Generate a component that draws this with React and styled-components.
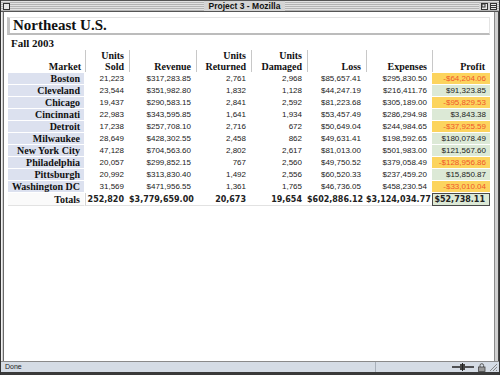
import React from 'react'
import styled, { createGlobalStyle } from 'styled-components'

const rows = [
  ['Boston', '21,223', '$317,283.85', '2,761', '2,968', '$85,657.41', '$295,830.50', '-$64,204.06'],
  ['Cleveland', '23,544', '$351,982.80', '1,832', '1,128', '$44,247.19', '$216,411.76', '$91,323.85'],
  ['Chicago', '19,437', '$290,583.15', '2,841', '2,592', '$81,223.68', '$305,189.00', '-$95,829.53'],
  ['Cincinnati', '22,983', '$343,595.85', '1,641', '1,934', '$53,457.49', '$286,294.98', '$3,843.38'],
  ['Detroit', '17,238', '$257,708.10', '2,716', '672', '$50,649.04', '$244,984.65', '-$37,925.59'],
  ['Milwaukee', '28,649', '$428,302.55', '2,458', '862', '$49,631.41', '$198,592.65', '$180,078.49'],
  ['New York City', '47,128', '$704,563.60', '2,802', '2,617', '$81,013.00', '$501,983.00', '$121,567.60'],
  ['Philadelphia', '20,057', '$299,852.15', '767', '2,560', '$49,750.52', '$379,058.49', '-$128,956.86'],
  ['Pittsburgh', '20,992', '$313,830.40', '1,492', '2,556', '$60,520.33', '$237,459.20', '$15,850.87'],
  ['Washington DC', '31,569', '$471,956.55', '1,361', '1,765', '$46,736.05', '$458,230.54', '-$33,010.04'],
]

const totals = ['252,820', '$3,779,659.00', '20,673', '19,654', '$602,886.12', '$3,124,034.77', '$52,738.11']

const columns = [
  { top: '', label: 'Market', width: 77 },
  { top: 'Units', label: 'Sold', width: 44 },
  { top: '', label: 'Revenue', width: 67 },
  { top: 'Units', label: 'Returned', width: 55 },
  { top: 'Units', label: 'Damaged', width: 56 },
  { top: '', label: 'Loss', width: 59 },
  { top: '', label: 'Expenses', width: 66 },
  { top: '', label: 'Profit', width: 58 },
]

const GlobalStyle = createGlobalStyle`
  html, body {
    margin: 0;
    padding: 0;
    overflow: hidden;
    background: #fff;
  }
`

const Window = styled.div`
  width: 500px;
  height: 375px;
  display: flex;
  flex-direction: column;
  box-sizing: border-box;
  border-left: 1px solid #333;
  border-right: 1px solid #333;
  background: #ccc;
`

const TitleBar = styled.div`
  height: 12px;
  display: flex;
  align-items: center;
  justify-content: space-between;
  padding: 0 2px;
  box-sizing: border-box;
  border-top: 1px solid #555;
  border-bottom: 1px solid #555;
  background: repeating-linear-gradient(#e2e2e2 0 1px, #b4b4b4 1px 2px);
  position: relative;
`

const Title = styled.div`
  font-family: 'Liberation Sans', Arial, sans-serif;
  font-weight: bold;
  font-size: 8.5px;
  line-height: 10px;
  color: #111;
  background: #d4d4d4;
  padding: 0 5px;
`

const WinBox = styled.div`
  width: 7px;
  height: 7px;
  box-sizing: border-box;
  border: 1px solid #333;
  background: #e6e6e6;
  position: relative;
`

const BoxGroup = styled.div`
  display: flex;
  gap: 2px;
  background: #d4d4d4;
  padding-left: 2px;
`

const Middle = styled.div`
  flex: 1;
  display: flex;
  min-height: 0;
`

const SideFrame = styled.div`
  width: ${(p) => p.$w}px;
  background: #d0d0d0;
  box-sizing: border-box;
  border-left: 1px solid ${(p) => p.$left};
  border-right: 1px solid ${(p) => p.$right};
`

const Content = styled.div`
  flex: 1;
  background: #fff;
  padding: 5px 0 0 3px;
  box-sizing: border-box;
  overflow: hidden;
`

const Heading = styled.h1`
  margin: 0;
  width: 483px;
  box-sizing: border-box;
  font-family: 'Liberation Serif', 'Times New Roman', serif;
  font-weight: bold;
  font-size: 15px;
  line-height: 14px;
  padding: 0 4px 1px 3px;
  color: #111;
  border-top: 1px solid #e4e4e4;
  border-right: 1px solid #e4e4e4;
  border-left: 3px solid #c4c4c4;
  border-bottom: 2px solid #bcbcbc;
`

const SubHeading = styled.h2`
  margin: 2px 0 0;
  padding-left: 4px;
  font-family: 'Liberation Serif', 'Times New Roman', serif;
  font-weight: bold;
  font-size: 11px;
  line-height: 12px;
  color: #111;
`

const Table = styled.table`
  margin: 0 0 0 1px;
  width: 482px;
  table-layout: fixed;
  border-collapse: separate;
  border-spacing: 0 1px;
`

const HeadCell = styled.th`
  height: 22px;
  padding: 0 ${(p) => (p.$first ? 4 : 5)}px 0 0;
  vertical-align: bottom;
  text-align: right;
  font-family: 'Liberation Serif', 'Times New Roman', serif;
  font-weight: bold;
  font-size: 10px;
  line-height: 11px;
  color: #111;
  border-left: ${(p) => (p.$first ? 'none' : '1px solid #c8c8c8')};
`

const MarketCell = styled.td`
  height: 11px;
  padding: 0 4px 0 0;
  text-align: right;
  font-family: 'Liberation Serif', 'Times New Roman', serif;
  font-weight: bold;
  font-size: 10px;
  line-height: 11px;
  color: #111;
  white-space: nowrap;
  background: ${(p) => (p.$total ? '#fafafa' : '#dce1ef')};
  border-right: 1px solid #fff;
  border-bottom: ${(p) => (p.$total ? '1px solid #e2e2e2' : 'none')};
`

const NumCell = styled.td`
  height: 11px;
  padding: 0 5px 0 0;
  text-align: right;
  white-space: nowrap;
  font-family: ${(p) => (p.$total ? "'DejaVu Sans', Verdana, sans-serif" : "'Liberation Sans', Arial, sans-serif")};
  font-weight: ${(p) => (p.$total ? 'bold' : 'normal')};
  font-size: 8px;
  line-height: 11px;
  color: #222;
  border-bottom: ${(p) => (p.$total ? '1px solid #e2e2e2' : 'none')};
  border-left: ${(p) => (p.$divider ? '1px solid #d4d4d4' : 'none')};
`

const ProfitCell = styled(NumCell)`
  padding-right: 4px;
  background: ${(p) => (p.$loss ? '#fcd45e' : '#dce9d6')};
  color: ${(p) => (p.$loss ? '#f0562a' : '#222')};
  border: ${(p) => (p.$total ? '1px solid #4a4a4a' : 'none')};
`

const StatusBar = styled.div`
  height: 14px;
  display: flex;
  align-items: stretch;
  box-sizing: border-box;
  border-top: 1px solid #8a8a8a;
  border-bottom: 3px solid #3a3a3a;
  background: #d5dce5;
`

const StatusText = styled.div`
  width: 370px;
  padding-left: 4px;
  font-family: 'Liberation Sans', Arial, sans-serif;
  font-size: 7px;
  line-height: 10px;
  color: #222;
  border-right: 1px solid #a8b0ba;
`

const StatusIcons = styled.div`
  flex: 1;
  display: flex;
  justify-content: flex-end;
  align-items: center;
  gap: 3px;
  padding-right: 1px;
`

const App = () => {
  return (
    <>
      <GlobalStyle />
      <Window>
        <TitleBar>
          <WinBox />
          <Title>Project 3 - Mozilla</Title>
          <BoxGroup>
            <WinBox>
              <svg width="5" height="5" style={{ position: 'absolute', top: 0, left: 0 }}>
                <rect x="0" y="0" width="3" height="3" fill="none" stroke="#333" strokeWidth="1" />
              </svg>
            </WinBox>
            <WinBox>
              <svg width="5" height="5" style={{ position: 'absolute', top: 0, left: 0 }}>
                <line x1="0" y1="1.5" x2="5" y2="1.5" stroke="#333" />
                <line x1="0" y1="3.5" x2="5" y2="3.5" stroke="#333" />
              </svg>
            </WinBox>
          </BoxGroup>
        </TitleBar>
        <Middle>
          <SideFrame $w={3} $left="#f2f2f2" $right="#6a6a6a" />
          <Content>
            <Heading>Northeast U.S.</Heading>
            <SubHeading>Fall 2003</SubHeading>
            <Table>
              <colgroup>
                {columns.map((c) => (
                  <col key={c.label} style={{ width: c.width }} />
                ))}
              </colgroup>
              <thead>
                <tr>
                  {columns.map((c, i) => (
                    <HeadCell key={c.label} $first={i === 0}>
                      {c.top && (
                        <>
                          {c.top}
                          <br />
                        </>
                      )}
                      {c.label}
                    </HeadCell>
                  ))}
                </tr>
              </thead>
              <tbody>
                {rows.map((r) => (
                  <tr key={r[0]}>
                    <MarketCell>{r[0]}</MarketCell>
                    {r.slice(1, 7).map((v, i) => (
                      <NumCell key={i}>{v}</NumCell>
                    ))}
                    <ProfitCell $loss={r[7].startsWith('-')}>{r[7]}</ProfitCell>
                  </tr>
                ))}
                <tr>
                  <MarketCell $total>Totals</MarketCell>
                  {totals.slice(0, 6).map((v, i) => (
                    <NumCell key={i} $total $divider={i === 0}>
                      {v}
                    </NumCell>
                  ))}
                  <ProfitCell $total>{totals[6]}</ProfitCell>
                </tr>
              </tbody>
            </Table>
          </Content>
          <SideFrame $w={5} $left="#8a8a8a" $right="#444" />
        </Middle>
        <StatusBar>
          <StatusText>Done</StatusText>
          <StatusIcons>
            <svg width="22" height="8" viewBox="0 0 22 8">
              <line x1="0" y1="4" x2="22" y2="4" stroke="#222" strokeWidth="1.5" />
              <rect x="8" y="1" width="5" height="6" fill="#444" />
              <line x1="10.5" y1="0" x2="10.5" y2="8" stroke="#222" />
            </svg>
            <svg width="9" height="9" viewBox="0 0 9 9">
              <path d="M3 4 V2.5 a1.8 1.8 0 0 1 3.6 0 V4" fill="none" stroke="#555" />
              <rect x="1.5" y="4" width="6.5" height="4.5" fill="#9a9a9a" stroke="#444" strokeWidth="0.8" />
            </svg>
            <svg width="9" height="10" viewBox="0 0 9 10">
              <line x1="1" y1="9" x2="8" y2="2" stroke="#888" />
              <line x1="4" y1="9" x2="8" y2="5" stroke="#888" />
              <line x1="7" y1="9" x2="8" y2="8" stroke="#888" />
            </svg>
          </StatusIcons>
        </StatusBar>
      </Window>
    </>
  )
}

export default App
